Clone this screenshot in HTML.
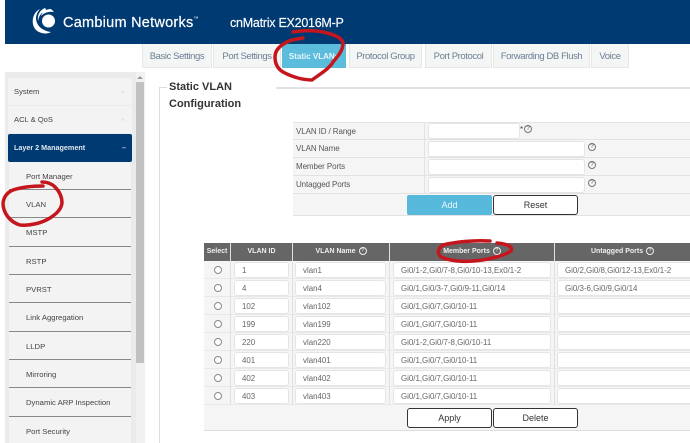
<!DOCTYPE html>
<html><head><meta charset="utf-8"><style>
html,body{margin:0;padding:0;background:#fff}
#p{position:relative;width:690px;height:443px;overflow:hidden;background:#fff;font-family:"Liberation Sans",sans-serif;filter:blur(.3px)}
#p div{position:absolute;box-sizing:border-box;white-space:nowrap}
.tab{top:44px;height:24px;background:#f4f5f5;border:1px solid #e6e8e8;border-top:0;color:#6c7f94;font-size:9.5px;letter-spacing:-.4px;line-height:25px;text-align:center}
.side{left:8px;width:124px;color:#444;font-size:7.6px}
.sub{left:9px;width:122px;height:28px;background:#f3f3f3;border-bottom:1px solid #888;color:#444;font-size:7.7px;line-height:29px;padding-left:17px}
.lb{left:293px;width:131px;height:18px;background:#f5f5f5;border-bottom:1px solid #e2e2e2;color:#555;font-size:8px;letter-spacing:-.1px;line-height:18px;padding-left:3px}
.rw{left:424px;width:266px;height:18px;background:#f5f5f5;border-bottom:1px solid #e2e2e2;border-left:1px solid #e2e2e2}
.in{background:#fff;border:1px solid #e4e4e4;border-radius:3px}
.q{width:8px;height:8px;border:1px solid #777;border-radius:50%;font-size:6px;line-height:6px;text-align:center;color:#555}
.btn{background:#fff;border:1px solid #333;border-radius:3px;color:#333;font-size:9px;text-align:center;line-height:19px}
.th{top:243px;height:18px;background:#666;color:#f0f0f0;font-size:7px;font-weight:bold;line-height:18px;text-align:center}
.th span{display:inline-block;width:6px;height:6px;border:.7px solid #eee;border-radius:50%;font-size:5px;line-height:6px;font-weight:normal;vertical-align:1px;margin-left:1px}
.tr{left:204px;width:486px;height:18px;background:#f5f5f5;border-bottom:1px solid #e8e8e8}
.c{height:16px;background:#fff;border:1px solid #e4e4e4;border-radius:3px;color:#666;font-size:7.9px;line-height:15px;padding-left:7px}
.r{left:214px;width:8px;height:8px;border:1px solid #888;border-radius:50%;background:#fff}
.v{top:243px;width:1px;height:162px;background:#e0e0e0}
</style></head><body><div id="p">

<div style="left:5px;top:0;width:685px;height:44px;background:#003a72"></div>
<svg style="position:absolute;left:30px;top:7px" width="30" height="28" viewBox="0 0 30 28" fill="#fff">
<circle cx="18.500" cy="14" r="6.500"/>
<path d="M10 2C1 6 0 21 9 25C13 27 18 27 21 25C13 24 6 19 6 11C6 8 8 4 10 2Z"/>
<path d="M15 1C10 3 7 8 8 14C9 8 12 5 16 4C16 3 16 2 15 1Z"/>
<path d="M21 2C16 2 12 5 11 9C14 6 18 4 24 5C23 4 22 3 21 2Z"/>
</svg>
<div style="left:63px;top:13px;color:#fff;font-size:14.500px;line-height:20px;letter-spacing:.25px;-webkit-text-stroke:.2px #fff">Cambium Networks<span style="font-size:5px;line-height:0;vertical-align:7px;-webkit-text-stroke:0">™</span></div>
<div style="left:230px;top:13px;color:#fff;font-size:12.500px;letter-spacing:-.25px;line-height:20px;-webkit-text-stroke:.15px #fff">cnMatrix EX2016M-P</div>

<div class="tab" style="left:142px;width:70px">Basic Settings</div>
<div class="tab" style="left:213px;width:68px">Port Settings</div>
<div class="tab" style="left:282px;width:64px;background:#5bbcdc;color:#e8f6fb;font-weight:bold;font-size:8px;letter-spacing:0;border:0">Static VLANs</div>
<div class="tab" style="left:349px;width:73px">Protocol Group</div>
<div class="tab" style="left:425px;width:67px">Port Protocol</div>
<div class="tab" style="left:493px;width:97px">Forwarding DB Flush</div>
<div class="tab" style="left:591px;width:38px">Voice</div>

<div style="left:5px;top:72px;width:140px;height:371px;background:#ebebeb"></div>
<div style="left:136px;top:72px;width:9px;height:371px;background:#f1f1f1"></div>
<div style="left:136px;top:82px;width:8px;height:281px;background:#c1c1c1"></div>
<div style="left:137px;top:76px;width:0;height:0;border:3px solid transparent;border-bottom:3px solid #999;border-top:0"></div>
<div class="side" style="top:78px;height:27px;background:#f3f3f3;line-height:27px;padding-left:6px">System<span style="position:absolute;right:7px;color:#ddd">+</span></div>
<div class="side" style="top:106px;height:27px;background:#f3f3f3;line-height:27px;padding-left:6px">ACL &amp; QoS<span style="position:absolute;right:7px;color:#ddd">+</span></div>
<div class="side" style="top:134px;height:28px;background:#003a72;color:#dfe8f0;border-radius:2px;font-weight:bold;font-size:7.200px;line-height:28px;padding-left:6px">Layer 2 Management<span style="position:absolute;right:6px;color:#ccd">–</span></div>
<div class="sub" style="top:162px">Port Manager</div>
<div class="sub" style="top:190px">VLAN</div>
<div class="sub" style="top:218px;height:29px">MSTP</div>
<div class="sub" style="top:247px">RSTP</div>
<div class="sub" style="top:275px">PVRST</div>
<div class="sub" style="top:303px;height:29px">Link Aggregation</div>
<div class="sub" style="top:332px">LLDP</div>
<div class="sub" style="top:360px">Mirroring</div>
<div class="sub" style="top:388px;height:29px">Dynamic ARP Inspection</div>
<div class="sub" style="top:417px;height:26px;border:0">Port Security</div>

<div style="left:159px;top:87px;width:1px;height:356px;background:#ddd"></div>
<div style="left:159px;top:87px;width:8px;height:1px;background:#ddd"></div>
<div style="left:276px;top:87px;width:414px;height:1.500px;background:#e2e2e2"></div>
<div style="left:169px;top:79px;color:#333;font-size:11px;font-weight:bold;line-height:17px">Static VLAN</div>
<div style="left:169px;top:96px;color:#333;font-size:11px;font-weight:bold;line-height:17px">Configuration</div>

<div class="lb" style="top:122px;border-top:1px solid #e2e2e2">VLAN ID / Range</div>
<div class="lb" style="top:140px">VLAN Name</div>
<div class="lb" style="top:158px">Member Ports</div>
<div class="lb" style="top:176px">Untagged Ports</div>
<div class="rw" style="top:122px;border-top:1px solid #e2e2e2"></div>
<div class="rw" style="top:140px"></div>
<div class="rw" style="top:158px"></div>
<div class="rw" style="top:176px"></div>
<div style="left:293px;top:194px;width:397px;height:22px;background:#f5f5f5;border-bottom:1px solid #e2e2e2"></div>
<div class="in" style="left:428px;top:123px;width:92px;height:16px"></div>
<div style="left:520px;top:125px;font-size:8px;color:#444">*</div>
<div class="q" style="left:524px;top:125px">?</div>
<div class="in" style="left:428px;top:141px;width:157px;height:16px"></div>
<div class="q" style="left:588px;top:143px">?</div>
<div class="in" style="left:428px;top:159px;width:157px;height:16px"></div>
<div class="q" style="left:588px;top:161px">?</div>
<div class="in" style="left:428px;top:177px;width:157px;height:16px"></div>
<div class="q" style="left:588px;top:179px">?</div>
<div style="left:407px;top:195px;width:85px;height:20px;background:#56b9dc;border-radius:2px;color:#eaf6fb;font-size:9px;text-align:center;line-height:20px">Add</div>
<div class="btn" style="left:493px;top:195px;width:85px;height:20px">Reset</div>

<div class="th" style="left:204px;width:26px">Select</div>
<div class="th" style="left:231px;width:61px">VLAN ID</div>
<div class="th" style="left:293px;width:96px">VLAN Name <span>?</span></div>
<div class="th" style="left:390px;width:164px">Member Ports <span>?</span></div>
<div class="th" style="left:555px;width:135px">Untagged Ports <span>?</span></div>

<div class="tr" style="top:261px"></div><div class="tr" style="top:279px"></div><div class="tr" style="top:297px"></div><div class="tr" style="top:315px"></div><div class="tr" style="top:333px"></div><div class="tr" style="top:351px"></div><div class="tr" style="top:369px"></div><div class="tr" style="top:387px"></div>
<div style="left:204px;top:405px;width:486px;height:26px;background:#f5f5f5;border-bottom:1px solid #ddd"></div>
<div class="v" style="left:230px"></div><div class="v" style="left:292px"></div><div class="v" style="left:389px"></div><div class="v" style="left:554px"></div>

<div class="r" style="top:266px"></div><div class="c" style="left:234px;top:262px;width:55px">1</div><div class="c" style="left:295px;top:262px;width:91px">vlan1</div><div class="c" style="left:393px;top:262px;width:158px">Gi0/1-2,Gi0/7-8,Gi0/10-13,Ex0/1-2</div><div class="c" style="left:557px;top:262px;width:140px">Gi0/2,Gi0/8,Gi0/12-13,Ex0/1-2</div>
<div class="r" style="top:284px"></div><div class="c" style="left:234px;top:280px;width:55px">4</div><div class="c" style="left:295px;top:280px;width:91px">vlan4</div><div class="c" style="left:393px;top:280px;width:158px">Gi0/1,Gi0/3-7,Gi0/9-11,Gi0/14</div><div class="c" style="left:557px;top:280px;width:140px">Gi0/3-6,Gi0/9,Gi0/14</div>
<div class="r" style="top:302px"></div><div class="c" style="left:234px;top:298px;width:55px">102</div><div class="c" style="left:295px;top:298px;width:91px">vlan102</div><div class="c" style="left:393px;top:298px;width:158px">Gi0/1,Gi0/7,Gi0/10-11</div><div class="c" style="left:557px;top:298px;width:140px"></div>
<div class="r" style="top:320px"></div><div class="c" style="left:234px;top:316px;width:55px">199</div><div class="c" style="left:295px;top:316px;width:91px">vlan199</div><div class="c" style="left:393px;top:316px;width:158px">Gi0/1,Gi0/7,Gi0/10-11</div><div class="c" style="left:557px;top:316px;width:140px"></div>
<div class="r" style="top:338px"></div><div class="c" style="left:234px;top:334px;width:55px">220</div><div class="c" style="left:295px;top:334px;width:91px">vlan220</div><div class="c" style="left:393px;top:334px;width:158px">Gi0/1-2,Gi0/7-8,Gi0/10-11</div><div class="c" style="left:557px;top:334px;width:140px"></div>
<div class="r" style="top:356px"></div><div class="c" style="left:234px;top:352px;width:55px">401</div><div class="c" style="left:295px;top:352px;width:91px">vlan401</div><div class="c" style="left:393px;top:352px;width:158px">Gi0/1,Gi0/7,Gi0/10-11</div><div class="c" style="left:557px;top:352px;width:140px"></div>
<div class="r" style="top:374px"></div><div class="c" style="left:234px;top:370px;width:55px">402</div><div class="c" style="left:295px;top:370px;width:91px">vlan402</div><div class="c" style="left:393px;top:370px;width:158px">Gi0/1,Gi0/7,Gi0/10-11</div><div class="c" style="left:557px;top:370px;width:140px"></div>
<div class="r" style="top:392px"></div><div class="c" style="left:234px;top:388px;width:55px">403</div><div class="c" style="left:295px;top:388px;width:91px">vlan403</div><div class="c" style="left:393px;top:388px;width:158px">Gi0/1,Gi0/7,Gi0/10-11</div><div class="c" style="left:557px;top:388px;width:140px"></div>

<div class="btn" style="left:407px;top:408px;width:85px;height:20px">Apply</div>
<div class="btn" style="left:493px;top:408px;width:85px;height:20px">Delete</div>

<svg style="position:absolute;left:0;top:0" width="690" height="443" fill="none" stroke="#c5161d" stroke-width="3.500" stroke-linecap="round" stroke-linejoin="round">
<path d="M303 38C296 39 290 40 287 42C279 46 275 51 275 57C275 64 278 69 283 72C292 77 303 80 312 80C320 74 329 69 333 62C339 55 343 50 343 43C342 38 335 35 327 33C316 30 303 30 293 32"/>
<path d="M42 182C47 182 52 184 55 187C60 192 62 197 62 203C61 210 56 214 50 218C42 223 30 226 20 225C10 222 3 213 3 203C4 196 8 192 13 190C22 187 32 186 43 186"/>
<path d="M490 241C473 240 455 242 443 245C438 248 437 253 441 257C450 261 463 262 473 261C487 260 504 256 511 251C513 247 508 244 497 243" stroke-width="3.500"/>
</svg>
</div></body></html>
